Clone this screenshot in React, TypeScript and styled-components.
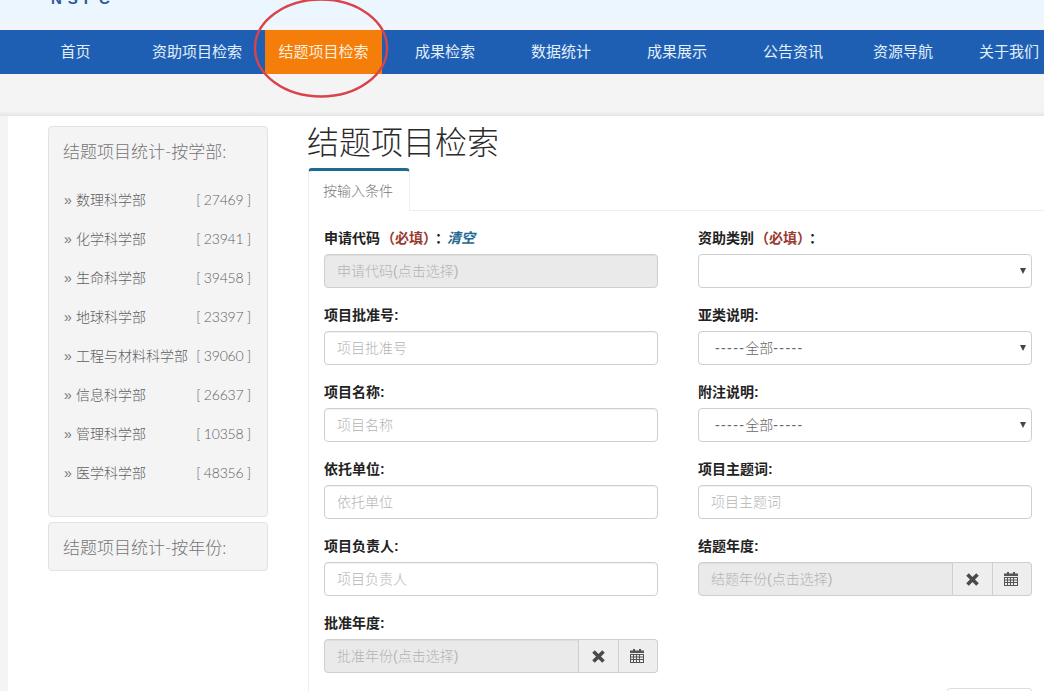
import React from "react";
import styled, { createGlobalStyle } from "styled-components";

const Global = createGlobalStyle`
  html, body { margin: 0; padding: 0; height: 691px; overflow: hidden; background: #f4f4f5; }
  body { font-family: "Liberation Sans", "Noto Sans CJK SC", sans-serif; font-size: 14px; }
  * { box-sizing: border-box; }
`;

const Page = styled.div`
  position: relative;
  width: 1044px;
  height: 691px;
  overflow: hidden;
`;
const TopBar = styled.header`
  height: 30px;
  overflow: hidden;
  padding-left: 51px;
  background: linear-gradient(#ecf6ff 0, #ecf6ff 60%, #f3f6f9 100%);
`;
const Logo = styled.div`
  margin-top: -9px;
  font-family: "Liberation Sans", sans-serif;
  font-weight: 700;
  font-size: 15px;
  line-height: 15px;
  letter-spacing: 6px;
  color: #2a5a9c;
`;
const Nav = styled.nav`
  display: flex;
  height: 44px;
  padding-left: 22px;
  background: #1e5fb3;
`;
const NavItem = styled.a<{ $w: number; $active?: boolean }>`
  flex: 0 0 ${(p) => p.$w}px;
  display: flex;
  align-items: center;
  justify-content: center;
  padding-bottom: 4px;
  font-size: 15px;
  color: ${(p) => (p.$active ? "#fdeedd" : "#e3f0fb")};
  background: ${(p) => (p.$active ? "#f57d09" : "transparent")};
`;
const Ring = styled.svg`
  position: absolute;
  left: 250px;
  top: -6px;
  width: 144px;
  height: 108px;
`;
const Spacer = styled.div`
  height: 42px;
  background: linear-gradient(#f4f4f5 0, #f4f4f5 88%, #e4e4e4 100%);
`;
const Card = styled.div`
  display: flex;
  height: 575px;
  margin-left: 8px;
  padding-left: 40px;
  background: #fff;
`;
const Side = styled.aside`
  flex: 0 0 220px;
  padding-top: 10px;
`;
const Panel = styled.section<{ $h: number }>`
  height: ${(p) => p.$h}px;
  margin-bottom: 5px;
  padding: 13px 16px 0 15px;
  background: #f4f4f5;
  border: 1px solid #e2e2e4;
  border-radius: 4px;
`;
const PanelTitle = styled.h3`
  margin: 0 0 0 -1px;
  font-family: "Lato", "Noto Sans CJK SC", sans-serif;
  font-size: 17px;
  line-height: 24px;
  font-weight: 300;
  color: #757575;
`;
const StatList = styled.ul`
  list-style: none;
  margin: 24px 0 0;
  padding: 0;
`;
const StatRow = styled.li`
  display: flex;
  justify-content: space-between;
  height: 39px;
  line-height: 24px;
  font-family: "Lato", "Noto Sans CJK SC", sans-serif;
  font-size: 14px;
  font-weight: 300;
  color: #5f5f5f;
  white-space: nowrap;
`;
const Mark = styled.span`
  display: inline-block;
  width: 12px;
  font-family: "Liberation Sans", sans-serif;
  font-size: 14px;
  color: #777;
`;
const Count = styled.span`
  letter-spacing: -0.2px;
`;
const Main = styled.main`
  flex: 1;
  margin-left: 40px;
  min-width: 0;
`;
const Title = styled.h1`
  margin: 6px 0 4px -1px;
  font-size: 32px;
  line-height: 42px;
  font-weight: 300;
  color: #2b2b2b;
`;
const TabBar = styled.div`
  display: flex;
  height: 43px;
  border-bottom: 1px solid #eee;
`;
const Tab = styled.div`
  width: 102px;
  height: 43px;
  padding-left: 14px;
  line-height: 40px;
  font-size: 14px;
  font-weight: 300;
  color: #777;
  background: #fff;
  border: 1px solid #eee;
  border-top: 3px solid #1f6a90;
  border-bottom: none;
  border-radius: 4px 4px 0 0;
`;
const Pane = styled.div`
  display: grid;
  grid-template-columns: 334px 334px;
  column-gap: 40px;
  grid-auto-rows: 77px;
  height: 480px;
  padding: 17px 0 0 15px;
  border-left: 1px solid #eee;
`;
const Field = styled.div`
  display: flex;
  flex-direction: column;
`;
const Label = styled.label`
  height: 20px;
  margin-bottom: 6px;
  line-height: 20px;
  font-size: 14px;
  font-weight: 700;
  color: #222;
  white-space: nowrap;
`;
const Required = styled.span`
  margin: 0 5px 0 1px;
  color: #9a3a30;
`;
const Colon = styled.span`
  letter-spacing: -2px;
`;
const Clear = styled.a`
  font-size: 14px;
  font-style: italic;
  color: #1f6a90;
`;
const Control = styled.div<{ $disabled?: boolean; $group?: boolean }>`
  flex: ${(p) => (p.$group ? 1 : "none")};
  min-width: 0;
  height: 34px;
  padding: 0 12px;
  line-height: 32px;
  font-size: 14px;
  font-weight: 300;
  color: #b4b4b4;
  white-space: nowrap;
  background: ${(p) => (p.$disabled ? "#eaeaeb" : "#fff")};
  border: 1px solid #cfcfcf;
  border-radius: ${(p) => (p.$group ? "4px 0 0 4px" : "4px")};
  box-shadow: inset 0 1px 1px rgba(0, 0, 0, 0.06);
`;
const Select = styled.div`
  position: relative;
  height: 34px;
  padding: 0 16px;
  line-height: 32px;
  font-size: 14px;
  font-weight: 300;
  color: #666;
  background: #fff;
  border: 1px solid #cfcfcf;
  border-radius: 4px;
  &::after {
    content: "";
    position: absolute;
    right: 5px;
    top: 13px;
    border-left: 3px solid transparent;
    border-right: 3px solid transparent;
    border-top: 6px solid #444;
  }
`;
const Dash = styled.span`
  letter-spacing: 1.4px;
`;
const Group = styled.div`
  display: flex;
  height: 34px;
`;
const Addon = styled.div<{ $last?: boolean }>`
  flex: 0 0 ${(p) => (p.$last ? 39 : 40)}px;
  display: flex;
  align-items: center;
  justify-content: center;
  padding-right: ${(p) => (p.$last ? 2 : 0)}px;
  color: #555;
  background: #eee;
  border: 1px solid #cfcfcf;
  border-left: none;
  border-radius: ${(p) => (p.$last ? "0 4px 4px 0" : "0")};
`;
const Bottom = styled.div`
  grid-column: 2;
  grid-row: 7;
  justify-self: end;
  width: 85px;
  height: 34px;
  margin-top: -2px;
  background: #fff;
  border: 1px solid #ddd;
  border-radius: 3px;
`;

const Remove = () => (
  <svg width="13" height="13" viewBox="0 0 13 13" fill="none" stroke="#4a4a4a" strokeWidth="3.6">
    <path d="M1.5 1.5l10 10M11.5 1.5l-10 10" />
  </svg>
);
const Calendar = () => (
  <svg width="14" height="14" viewBox="0 0 14 14" fill="#555">
    <rect x="3" y="0" width="2" height="2" />
    <rect x="9" y="0" width="2" height="2" />
    <rect x="0" y="1.5" width="14" height="2.5" />
    <path d="M0 5h14v9H0zM1 6v1.5h2V6zm3 0v1.5h2V6zm3 0v1.5h2V6zm3 0v1.5h3V6zM1 8.5V10h2V8.5zm3 0V10h2V8.5zm3 0V10h2V8.5zm3 0V10h3V8.5zM1 11v2h2v-2zm3 0v2h2v-2zm3 0v2h2v-2zm3 0v2h3v-2z" fillRule="evenodd" />
  </svg>
);

const navItems: [string, number][] = [
  ["首页", 107],
  ["资助项目检索", 136],
  ["结题项目检索", 117],
  ["成果检索", 126],
  ["数据统计", 106],
  ["成果展示", 126],
  ["公告资讯", 106],
  ["资源导航", 114],
  ["关于我们", 98],
];
const stats: [string, string][] = [
  ["数理科学部", "27469"],
  ["化学科学部", "23941"],
  ["生命科学部", "39458"],
  ["地球科学部", "23397"],
  ["工程与材料科学部", "39060"],
  ["信息科学部", "26637"],
  ["管理科学部", "10358"],
  ["医学科学部", "48356"],
];

const DateField = ({ label, hint }: { label: string; hint: string }) => (
  <Field>
    <Label>{label}</Label>
    <Group>
      <Control $disabled $group>{hint}</Control>
      <Addon><Remove /></Addon>
      <Addon $last><Calendar /></Addon>
    </Group>
  </Field>
);
const TextField = ({ label, hint }: { label: string; hint: string }) => (
  <Field>
    <Label>{label}</Label>
    <Control>{hint}</Control>
  </Field>
);
const SelectField = ({ label, all }: { label: React.ReactNode; all?: boolean }) => (
  <Field>
    <Label>{label}</Label>
    <Select>{all && <><Dash>-----</Dash>全部<Dash>-----</Dash></>}</Select>
  </Field>
);

export default function App() {
  return (
    <Page>
      <Global />
      <TopBar><Logo>NSFC</Logo></TopBar>
      <Nav>
        {navItems.map(([t, w], i) => (
          <NavItem key={t} $w={w} $active={i === 2}>{t}</NavItem>
        ))}
      </Nav>
      <Ring viewBox="0 0 144 108">
        <ellipse cx="71" cy="54" rx="66" ry="48.5" fill="none" stroke="#d9434c" strokeWidth="2.4" />
      </Ring>
      <Spacer />
      <Card>
        <Side>
          <Panel $h={391}>
            <PanelTitle>结题项目统计-按学部:</PanelTitle>
            <StatList>
              {stats.map(([n, c]) => (
                <StatRow key={n}>
                  <span><Mark>»</Mark>{n}</span>
                  <Count>[ {c} ]</Count>
                </StatRow>
              ))}
            </StatList>
          </Panel>
          <Panel $h={49}>
            <PanelTitle>结题项目统计-按年份:</PanelTitle>
          </Panel>
        </Side>
        <Main>
          <Title>结题项目检索</Title>
          <TabBar><Tab>按输入条件</Tab></TabBar>
          <Pane>
            <Field>
              <Label>申请代码<Required>（必填）</Required><Colon>：</Colon><Clear>清空</Clear></Label>
              <Control $disabled>申请代码(点击选择)</Control>
            </Field>
            <SelectField label={<>资助类别<Required>（必填）</Required><Colon>：</Colon></>} />
            <TextField label="项目批准号:" hint="项目批准号" />
            <SelectField label="亚类说明:" all />
            <TextField label="项目名称:" hint="项目名称" />
            <SelectField label="附注说明:" all />
            <TextField label="依托单位:" hint="依托单位" />
            <TextField label="项目主题词:" hint="项目主题词" />
            <TextField label="项目负责人:" hint="项目负责人" />
            <DateField label="结题年度:" hint="结题年份(点击选择)" />
            <DateField label="批准年度:" hint="批准年份(点击选择)" />
            <Bottom />
          </Pane>
        </Main>
      </Card>
    </Page>
  );
}
